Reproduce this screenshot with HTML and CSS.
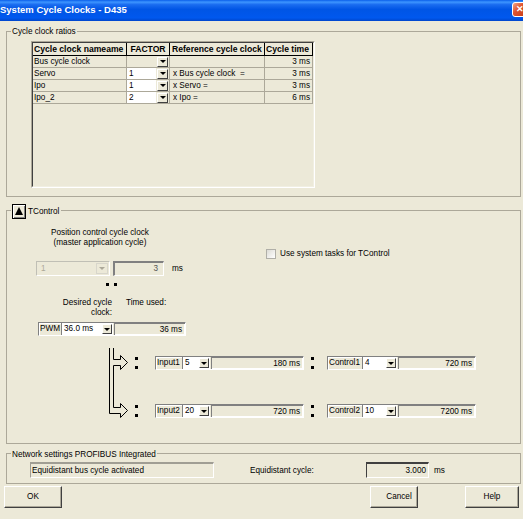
FILE: index.html
```html
<!DOCTYPE html>
<html lang="en">
<head>
<meta charset="utf-8">
<title>System Cycle Clocks - D435</title>
<link rel="stylesheet" href="styles.css">
</head>
<body>
<div class="titlebar">
  <span class="title">System Cycle Clocks - D435</span>
  <span class="close">✕</span>
</div>

<div class="group g1">
  <div class="legend">Cycle clock ratios</div>
  <div class="tbl-outer">
    <div class="tbl">
      <div class="row head">
        <div class="c">Cycle clock nameame</div>
        <div class="c center">FACTOR</div>
        <div class="c ref">Reference cycle clock</div>
        <div class="c">Cycle time</div>
      </div>
      <div class="row">
        <div class="c">Bus cycle clock</div>
        <div class="c factor"><span class="fv blank"></span><span class="dd"></span></div>
        <div class="c ref"></div>
        <div class="c right">3 ms</div>
      </div>
      <div class="row">
        <div class="c">Servo</div>
        <div class="c factor"><span class="fv">1</span><span class="dd"></span></div>
        <div class="c ref">x Bus cycle clock&nbsp; =</div>
        <div class="c right">3 ms</div>
      </div>
      <div class="row">
        <div class="c">Ipo</div>
        <div class="c factor"><span class="fv">1</span><span class="dd"></span></div>
        <div class="c ref">x Servo =</div>
        <div class="c right">3 ms</div>
      </div>
      <div class="row">
        <div class="c">Ipo_2</div>
        <div class="c factor"><span class="fv">2</span><span class="dd"></span></div>
        <div class="c ref">x Ipo =</div>
        <div class="c right">6 ms</div>
      </div>
    </div>
  </div>
</div>

<div class="group g2">
  <div class="legend legend-btn"><span class="tbtn"></span><span>TControl</span></div>
  <div class="tc-top">
    <div class="tc-left">
      <div class="caption">Position control cycle clock<br>(master application cycle)</div>
      <div class="combo-row">
        <div class="dcombo"><span class="txt">1</span><span class="dd dis"></span></div>
        <div class="dfield">3</div>
        <span class="ms">ms</span>
      </div>
      <div class="dots"><i></i><i></i></div>
      <div class="desired">
        <div class="lab">Desired cycle<br>clock:</div>
        <div class="tu">Time used:</div>
      </div>
      <div class="ctl pwm">
        <span class="lbl">PWM</span>
        <span class="cmb"><span class="v">36.0 ms</span><span class="dd"></span></span>
        <span class="fld">36 ms</span>
      </div>
    </div>
    <div class="tc-right">
      <span class="check"></span>
      <span>Use system tasks for TControl</span>
    </div>
  </div>
  <div class="arrows">
    <svg class="flow" width="26" height="75" viewBox="0 0 26 75">
      <path d="M3.5 3 V68.5 H14.5 V72.5 L21.5 65.5 L14.5 58.5 V62.5 H7.5 V20.5 H14.5 V24.5 L21.5 17.5 L14.5 10.5 V14.5 H7.5 V3" fill="none" stroke="#000" stroke-width="1"/>
    </svg>
    <div class="arrow-rows">
      <div class="arow">
        <span class="colon first"><i></i><i></i></span>
        <div class="ctl inp">
          <span class="lbl">Input1</span>
          <span class="cmb"><span class="v">5</span><span class="dd"></span></span>
          <span class="fld">180 ms</span>
        </div>
        <span class="colon mid"><i></i><i></i></span>
        <div class="ctl con">
          <span class="lbl">Control1</span>
          <span class="cmb"><span class="v">4</span><span class="dd"></span></span>
          <span class="fld">720 ms</span>
        </div>
      </div>
      <div class="arow">
        <span class="colon first"><i></i><i></i></span>
        <div class="ctl inp">
          <span class="lbl">Input2</span>
          <span class="cmb"><span class="v">20</span><span class="dd"></span></span>
          <span class="fld">720 ms</span>
        </div>
        <span class="colon mid"><i></i><i></i></span>
        <div class="ctl con">
          <span class="lbl">Control2</span>
          <span class="cmb"><span class="v">10</span><span class="dd"></span></span>
          <span class="fld">7200 ms</span>
        </div>
      </div>
    </div>
  </div>
</div>

<div class="group g3">
  <div class="legend legend-net">Network settings PROFIBUS Integrated</div>
  <div class="net-row">
    <div class="sfield">Equidistant bus cycle activated</div>
    <div class="eqlab">Equidistant cycle:</div>
    <div class="nfield">3.000</div>
    <span class="ms2">ms</span>
  </div>
</div>

<div class="btns">
  <div class="btn ok">OK</div>
  <div class="btn cancel">Cancel</div>
  <div class="btn help">Help</div>
</div>
</body>
</html>
```

FILE: styles.css
```css
* { box-sizing: border-box; }
html, body { margin: 0; padding: 0; }
body {
  width: 523px;
  height: 519px;
  overflow: hidden;
  background: #ECE9D8;
  font-family: "Liberation Sans", Arial, sans-serif;
  font-size: 8.2px;
  line-height: 11px;
  color: #000;
}

/* title bar */
.titlebar {
  height: 21px;
  display: flex;
  align-items: center;
  background: linear-gradient(to bottom, #0A5FEA 0%, #3D95FF 10%, #1A6CF0 22%, #0055E5 45%, #0058EE 85%, #0046CC 100%);
}
.title {
  color: #fff;
  font-weight: bold;
  font-size: 9.5px;
  margin-top: -2px;
  white-space: nowrap;
}
.close {
  align-self: flex-start;
  margin: 2px -5px 0 auto;
  width: 16px;
  height: 15px;
  border: 1px solid #fff;
  border-radius: 3px;
  background: linear-gradient(135deg, #F2A68A 0%, #E0542F 40%, #C23A16 100%);
  color: #fff;
  font-size: 9px;
  font-weight: bold;
  display: flex;
  align-items: center;
  justify-content: center;
}

/* group boxes */
.group {
  margin-left: 6px;
  width: 515px;
  border: 1px solid #ACA899;
}
.g1 { margin-top: 10px; height: 166px; }
.g2 { margin-top: 13px; height: 234px; }
.g3 { margin-top: 9px; height: 31px; }
.legend {
  width: max-content;
  margin: -6px 0 0 4px;
  padding: 0 1px;
  background: #ECE9D8;
  line-height: 11px;
}
.legend-net { margin-top: -5px; }
.legend-btn {
  display: flex;
  align-items: center;
  gap: 2px;
  margin-top: -7px;
  padding: 0 2px 0 1px;
  height: 15px;
}
.tbtn {
  width: 14px;
  height: 15px;
  border: 1px solid #000;
  box-shadow: inset 1px 1px #fff, inset -1px -1px #808080;
  background: #ECE9D8;
  display: flex;
  align-items: center;
  justify-content: center;
}
.tbtn::after {
  content: "";
  border-left: 4px solid transparent;
  border-right: 4px solid transparent;
  border-bottom: 8px solid #000;
  margin-top: -1px;
}

/* table */
.tbl-outer {
  margin: 4px 0 0 24px;
  width: 284px;
  height: 147px;
  border: 1px solid;
  border-color: #ACA899 #fff #fff #ACA899;
}
.tbl {
  height: 100%;
  border: 1px solid;
  border-color: #404040 #F1EFE2 #F1EFE2 #404040;
}
.row {
  display: grid;
  grid-template-columns: 94px 43px 95px 48px;
  height: 12px;
}
.row.head { height: 13px; }
.c {
  border-right: 1px solid #ACA899;
  border-bottom: 1px solid #ACA899;
  padding-left: 1px;
  line-height: 11px;
  white-space: nowrap;
  overflow: hidden;
}
.head .c {
  font-weight: bold;
  font-size: 8.6px;
  line-height: 12px;
  border-color: #000;
}
.c.center { text-align: center; padding-left: 0; }
.c.right { text-align: right; padding-right: 2px; }
.c.ref { padding-left: 3px; }
.head .c.ref { padding-left: 2px; }
.factor {
  display: flex;
  align-items: center;
  padding-left: 0;
}
.fv {
  flex: 1;
  align-self: stretch;
  background: #fff;
  padding-left: 2px;
}
.fv.blank { background: transparent; }
.dd {
  width: 11px;
  height: 10px;
  margin: 0 1px;
  background: #ECE9D8;
  border: 1px solid;
  border-color: #fff #404040 #404040 #fff;
  display: flex;
  align-items: center;
  justify-content: center;
  flex: none;
}
.dd::after {
  content: "";
  border-left: 3px solid transparent;
  border-right: 3px solid transparent;
  border-top: 3px solid #000;
}
.dd.dis { border-color: #D8D6CB; width: 12px; height: 11px; }
.dd.dis::after { border-top-color: #ACA899; }

/* TControl */
.tc-top { display: flex; margin-top: 9px; }
.tc-left { margin-left: 29px; width: 150px; }
.caption {
  width: 128px;
  text-align: center;
  line-height: 9.5px;
  white-space: nowrap;
}
.combo-row {
  display: flex;
  align-items: center;
  margin-top: 14px;
  height: 15px;
}
.dcombo {
  width: 74px;
  height: 15px;
  border: 1px solid;
  border-color: #C0BFB5 #fff #fff #C0BFB5;
  display: flex;
  align-items: center;
  color: #ACA899;
}
.dcombo .txt { flex: 1; padding-left: 4px; line-height: 13px; }
.dfield {
  width: 51px;
  height: 15px;
  margin-left: 3px;
  border-style: solid;
  border-width: 2px 1px 1px 2px;
  border-color: #808080 #fff #fff #808080;
  text-align: right;
  padding-right: 5px;
  line-height: 12px;
  color: #555;
}
.ms { margin-left: 8px; }
.dots { display: flex; gap: 5px; margin: 7px 0 0 70px; height: 3px; }
.dots i, .colon i { display: block; width: 3px; height: 3px; background: #000; }
.desired { display: flex; margin-top: 12px; }
.desired .lab { width: 76px; text-align: right; line-height: 10px; }
.desired .tu { margin-left: 14px; line-height: 10px; }

.ctl {
  display: flex;
  height: 14px;
  border: 1px solid;
  border-color: #808080 #fff #fff #808080;
  white-space: nowrap;
}
.ctl .lbl {
  padding-left: 1px;
  line-height: 12px;
  border-right: 1px solid #808080;
  box-shadow: inset 1px 1px #fff;
  overflow: hidden;
}
.ctl .cmb {
  display: flex;
  align-items: center;
  background: #fff;
}
.ctl .cmb .v { flex: 1; padding-left: 2px; line-height: 12px; }
.ctl .dd { width: 10px; height: 10px; margin: 0 1px; }
.ctl .fld {
  flex: 1;
  margin-left: 1px;
  text-align: right;
  padding-right: 3px;
  line-height: 12px;
  border-left: 1px solid #808080;
  border-top: 1px solid #808080;
  box-shadow: inset -1px -1px #fff;
}
.ctl.pwm { width: 148px; margin: 4px 0 0 2px; }
.pwm .lbl { width: 23px; }
.pwm .cmb { width: 51px; }
.inp { width: 149px; }
.inp .lbl { width: 27px; }
.inp .cmb { width: 27px; }
.con { width: 149px; }
.con .lbl { width: 35px; }
.con .cmb { width: 34px; }

.tc-right {
  display: flex;
  align-items: center;
  gap: 4px;
  margin: 20px 0 0 80px;
  height: 11px;
  white-space: nowrap;
}
.check {
  width: 10px;
  height: 10px;
  border: 1px solid #B0AFA8;
  background: linear-gradient(135deg, #DCDBD5, #fff);
}

.arrows { display: flex; margin: 9px 0 0 99px; }
.flow { display: block; flex: none; }
.arrow-rows {
  display: flex;
  flex-direction: column;
  gap: 34px;
  padding-top: 11px;
}
.arow { display: flex; align-items: center; height: 14px; }
.colon { display: flex; flex-direction: column; gap: 6px; }
.colon.first { margin: 0 17px 0 3px; }
.colon.mid { margin: 0 13px 0 7px; }

/* network */
.net-row { display: flex; align-items: center; margin: 2px 0 0 23px; }
.sfield {
  width: 184px;
  height: 16px;
  border-style: solid;
  border-width: 2px 1px 1px 1px;
  border-color: #A09E94 #fff #fff #A09E94;
  padding-left: 1px;
  line-height: 13px;
  white-space: nowrap;
}
.eqlab { width: 116px; margin-left: 36px; white-space: nowrap; }
.nfield {
  width: 63px;
  height: 16px;
  border-style: solid;
  border-width: 2px 1px 1px 1px;
  border-color: #404040 #fff #fff #404040;
  text-align: right;
  padding-right: 2px;
  line-height: 13px;
}
.ms2 { margin-left: 5px; }

/* buttons */
.btns { display: flex; margin-top: 2px; }
.btn {
  height: 22px;
  border: 1px solid;
  border-color: #fff #404040 #404040 #fff;
  box-shadow: inset -1px -1px #ACA899;
  text-align: center;
  line-height: 19px;
}
.ok { width: 58px; margin-left: 4px; }
.cancel { width: 48px; margin-left: 308px; padding-left: 10px; }
.help { width: 54px; margin-left: 47px; }
```
